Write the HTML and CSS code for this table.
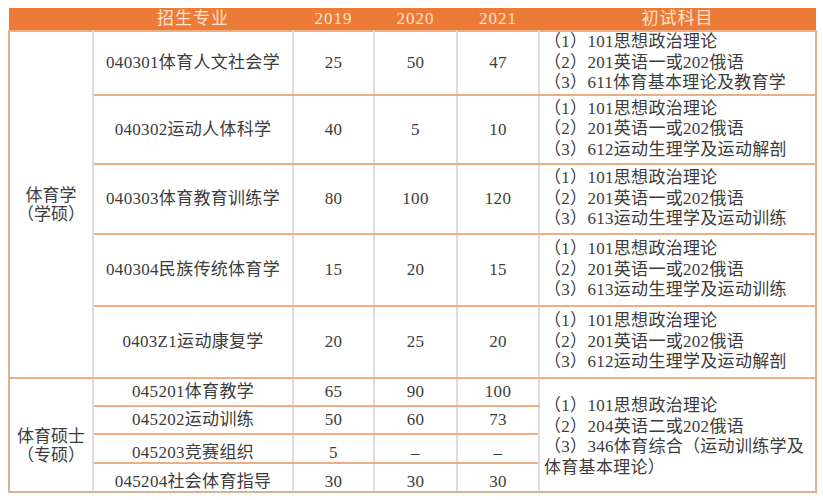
FILE: index.html
```html
<!DOCTYPE html>
<html lang="zh">
<head>
<meta charset="utf-8">
<title>招生专业</title>
<link rel="stylesheet" href="styles.css">
</head>
<body>
<table class="plan">
  <colgroup>
    <col class="c-group">
    <col class="c-major">
    <col class="c-y1">
    <col class="c-y2">
    <col class="c-y3">
    <col class="c-subj">
  </colgroup>
  <thead>
    <tr class="head">
      <th></th>
      <th>招生专业</th>
      <th>2019</th>
      <th>2020</th>
      <th>2021</th>
      <th>初试科目</th>
    </tr>
  </thead>
  <tbody>
    <tr class="r1">
      <td class="group" rowspan="5">体育学<br>（学硕）</td>
      <td>040301体育人文社会学</td>
      <td>25</td><td>50</td><td>47</td>
      <td class="subj">（1）101思想政治理论<br>（2）201英语一或202俄语<br>（3）611体育基本理论及教育学</td>
    </tr>
    <tr class="r2">
      <td>040302运动人体科学</td>
      <td>40</td><td>5</td><td>10</td>
      <td class="subj">（1）101思想政治理论<br>（2）201英语一或202俄语<br>（3）612运动生理学及运动解剖</td>
    </tr>
    <tr class="r3">
      <td>040303体育教育训练学</td>
      <td>80</td><td>100</td><td>120</td>
      <td class="subj">（1）101思想政治理论<br>（2）201英语一或202俄语<br>（3）613运动生理学及运动训练</td>
    </tr>
    <tr class="r4">
      <td>040304民族传统体育学</td>
      <td>15</td><td>20</td><td>15</td>
      <td class="subj">（1）101思想政治理论<br>（2）201英语一或202俄语<br>（3）613运动生理学及运动训练</td>
    </tr>
    <tr class="r5">
      <td>0403Z1运动康复学</td>
      <td>20</td><td>25</td><td>20</td>
      <td class="subj">（1）101思想政治理论<br>（2）201英语一或202俄语<br>（3）612运动生理学及运动解剖</td>
    </tr>
    <tr class="s1">
      <td class="group group-pro" rowspan="4">体育硕士<br>（专硕）</td>
      <td>045201体育教学</td>
      <td>65</td><td>90</td><td>100</td>
      <td class="subj subj-pro" rowspan="4">（1）101思想政治理论<br>（2）204英语二或202俄语<br>（3）346体育综合（运动训练学及体育基本理论）</td>
    </tr>
    <tr class="s2">
      <td>045202运动训练</td>
      <td>50</td><td>60</td><td>73</td>
    </tr>
    <tr class="s3">
      <td class="low">045203竞赛组织</td>
      <td class="low">5</td><td class="low">–</td><td class="low">–</td>
    </tr>
    <tr class="s4">
      <td class="low">045204社会体育指导</td>
      <td class="low">30</td><td class="low">30</td><td class="low">30</td>
    </tr>
  </tbody>
</table>
</body>
</html>
```

FILE: styles.css
```css
html, body {
  margin: 0;
  padding: 0;
  background: #ffffff;
}

body {
  padding: 8px;
  font-family: "Liberation Serif", "Noto Sans CJK SC", serif;
  color: #3c3c3c;
}

.plan {
  border-collapse: collapse;
  table-layout: fixed;
  width: 807px;
  font-size: 17px;
  letter-spacing: 0.3px;
}

.c-group { width: 84px; }
.c-major { width: 200px; }
.c-y1 { width: 81px; }
.c-y2 { width: 83px; }
.c-y3 { width: 82px; }
.c-subj { width: 277px; }

.head th {
  height: 22px;
  padding: 0;
  background: #ec7b38;
  color: #fde3cd;
  font-weight: normal;
  line-height: 22px;
  text-align: center;
  border: none;
  letter-spacing: 1px;
}

.plan td {
  padding: 0;
  text-align: center;
  vertical-align: middle;
  border-top: 2px solid #eeae82;
  border-bottom: 2px solid #eeae82;
  border-left: 2px solid #dcdce2;
  border-right: 2px solid #dcdce2;
  line-height: 20px;
}

.plan td:first-child {
  border-left: 2px solid #dcb192;
}

.plan td.subj {
  border-right: 2px solid #dcb192;
  text-align: left;
  padding: 0 3px 0 4px;
  line-height: 20.5px;
}

.plan tr.s4 td,
.plan td.subj-pro,
.plan td.group-pro {
  border-bottom: 2px solid #dcb192;
}

.plan td.group {
  line-height: 19px;
  letter-spacing: 0;
}

.plan td.group-pro {
  padding-top: 22px;
}

.plan td.subj-pro {
  padding-top: 4px;
}

.plan td.low {
  padding-top: 9px;
  line-height: 18px;
}

.r1 { height: 64px; }
.r2 { height: 69px; }
.r3 { height: 70px; }
.r4 { height: 72px; }
.r5 { height: 72px; }
.s1 { height: 28px; }
.s2 { height: 28px; }
.s3 { height: 29px; }
.s4 { height: 29px; }
```
